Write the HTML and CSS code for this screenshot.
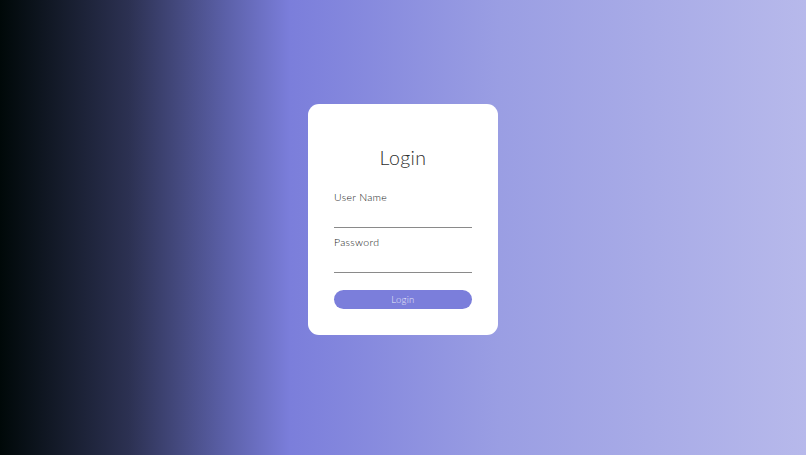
FILE: index.html
```html
<!DOCTYPE html>
<html lang="en">
<head>
<meta charset="utf-8">
<title>Login</title>
<link rel="stylesheet" href="styles.css">
</head>
<body>
<main class="page">
  <form class="card">
    <h1 class="title">Login</h1>
    <label class="field">
      <span class="label">User Name</span>
      <input class="input" type="text">
    </label>
    <label class="field">
      <span class="label">Password</span>
      <input class="input" type="password">
    </label>
    <button class="btn" type="button">Login</button>
  </form>
</main>
</body>
</html>
```
FILE: styles.css
```css
* { box-sizing: border-box; }
html, body { margin: 0; height: 100%; }
body {
  font-family: "Lato", "Open Sans", sans-serif;
  background: linear-gradient(to right, #000808 0%, #2c3152 16%, #5b60a8 28%, #7b7edb 36%, #9a9ee3 62%, #b7b9eb 100%);
}
.page {
  height: 100%;
  display: flex;
  align-items: center;
  justify-content: center;
  padding-bottom: 16px;
}
.card {
  width: 190px;
  height: 231px;
  background: #fff;
  border-radius: 11px;
  padding: 39px 26px 0 26px;
  display: flex;
  flex-direction: column;
}
.title {
  margin: 0 0 17px;
  font-size: 19.5px;
  font-weight: 300;
  color: #2e2e2e;
  text-align: center;
  line-height: 30px;
  letter-spacing: 0.4px;
}
.field {
  display: flex;
  flex-direction: column;
  margin-bottom: 7px;
}
.label {
  font-size: 10.5px;
  font-weight: 300;
  color: #222;
  line-height: 14px;
  letter-spacing: 0.3px;
}
.input {
  border: none;
  border-bottom: 1px solid #8a8a8a;
  height: 24px;
  outline: none;
  padding: 0;
  background: transparent;
}
.btn {
  margin-top: 10px;
  height: 19px;
  border: none;
  border-radius: 10px;
  background: #7b7edb;
  color: #e6e7f8;
  font-family: inherit;
  font-size: 9.5px;
  font-weight: 300;
  letter-spacing: 0.3px;
}
```
